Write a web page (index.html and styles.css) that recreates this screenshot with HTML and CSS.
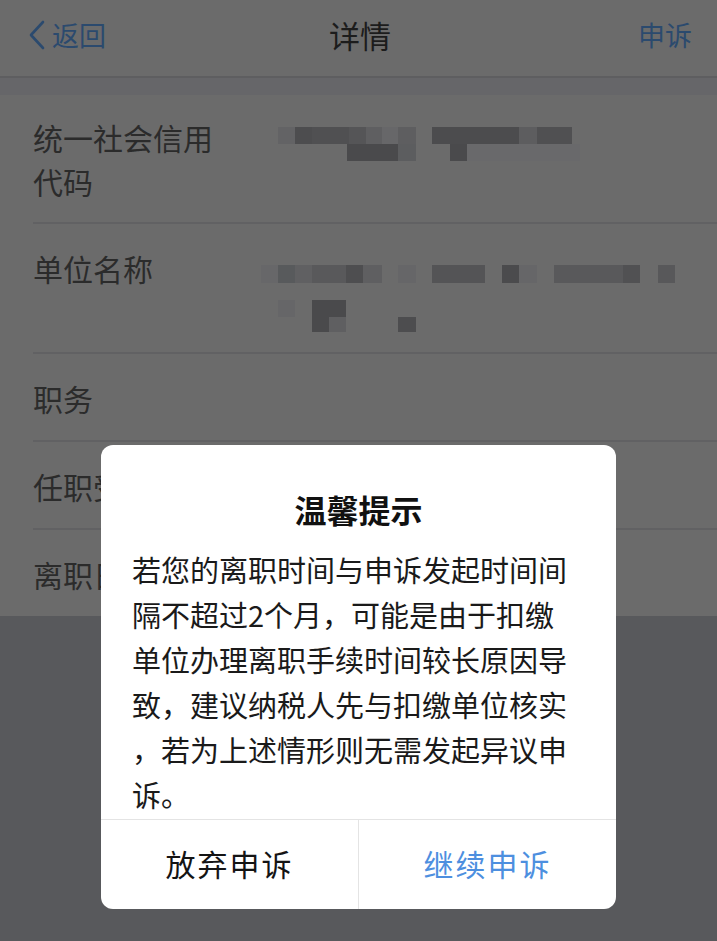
FILE: index.html
```html
<!DOCTYPE html>
<html lang="zh-CN">
<head>
    <meta charset="UTF-8">
    <meta name="viewport" content="width=device-width, initial-scale=1.0">
    <title>详情</title>
    <link rel="stylesheet" href="styles.css">
</head>
<body>
    <div class="page">
        <div class="navbar">
            <a class="nav-back" href="#">
                <svg class="chevron" width="18" height="30" viewBox="0 0 18 30">
                    <polyline points="15,2 3,15 15,28" fill="none" stroke="currentColor" stroke-width="2.6" stroke-linecap="round" stroke-linejoin="round"/>
                </svg>
                返回
            </a>
            <div class="nav-title">详情</div>
            <a class="nav-action" href="#">申诉</a>
        </div>
        <div class="section-gap"></div>

        <div class="info-list">
            <div class="info-row">
                <div class="info-label">统一社会信用代码</div>
                <div class="info-value">
                    <!-- blurred value -->
                    <svg class="mosaic mosaic-code" width="330" height="34">
                        <rect x="17" y="0" width="17" height="17" fill="#636365"/>
                        <rect x="34" y="0" width="17" height="17" fill="#4d4d4f"/>
                        <rect x="51" y="0" width="37" height="17" fill="#505052"/>
                        <rect x="88" y="0" width="17" height="17" fill="#555557"/>
                        <rect x="105" y="0" width="16" height="17" fill="#5f5f61"/>
                        <rect x="121" y="0" width="16" height="17" fill="#676769"/>
                        <rect x="137" y="0" width="18" height="17" fill="#5e5e60"/>
                        <rect x="171" y="0" width="87" height="17" fill="#4c4c4e"/>
                        <rect x="258" y="0" width="18" height="17" fill="#5d5d5f"/>
                        <rect x="276" y="0" width="35" height="17" fill="#505052"/>
                        <rect x="86" y="17" width="51" height="17" fill="#4a4a4c"/>
                        <rect x="137" y="17" width="18" height="17" fill="#5c5d5f"/>
                        <rect x="189" y="17" width="17" height="17" fill="#4a4a4c"/>
                        <rect x="206" y="17" width="113" height="17" fill="#69696b"/>
                    </svg>
                </div>
            </div>
            <div class="info-row">
                <div class="info-label">单位名称</div>
                <div class="info-value">
                    <svg class="mosaic mosaic-name" width="420" height="67">
                        <rect x="0" y="0" width="17" height="18" fill="#676769"/>
                        <rect x="17" y="0" width="17" height="18" fill="#585a5c"/>
                        <rect x="34" y="0" width="17" height="18" fill="#606062"/>
                        <rect x="51" y="0" width="34" height="18" fill="#59595b"/>
                        <rect x="85" y="0" width="17" height="18" fill="#4e4e50"/>
                        <rect x="102" y="0" width="19" height="18" fill="#5f5f61"/>
                        <rect x="137" y="0" width="18" height="18" fill="#666668"/>
                        <rect x="171" y="0" width="53" height="18" fill="#545456"/>
                        <rect x="241" y="0" width="17" height="18" fill="#4b4b4d"/>
                        <rect x="258" y="0" width="18" height="18" fill="#666668"/>
                        <rect x="293" y="0" width="69" height="18" fill="#59595b"/>
                        <rect x="362" y="0" width="17" height="18" fill="#515153"/>
                        <rect x="397" y="0" width="17" height="18" fill="#58585a"/>
                        <rect x="17" y="35" width="17" height="17" fill="#666668"/>
                        <rect x="51" y="35" width="34" height="17" fill="#4a4a4c"/>
                        <rect x="51" y="52" width="17" height="15" fill="#4a4a4c"/>
                        <rect x="68" y="52" width="17" height="15" fill="#5f5f61"/>
                        <rect x="137" y="52" width="18" height="15" fill="#4d4d4f"/>
                    </svg>
                </div>
            </div>
            <div class="info-row">
                <div class="info-label">职务</div>
                <div class="info-value"></div>
            </div>
            <div class="info-row">
                <div class="info-label">任职受雇日期</div>
                <div class="info-value"></div>
            </div>
            <div class="info-row">
                <div class="info-label">离职日期</div>
                <div class="info-value"></div>
            </div>
        </div>
    </div>

    <div class="dialog">
        <div class="dialog-title">温馨提示</div>
        <p class="dialog-text">若您的离职时间与申诉发起时间间隔不超过2个月，可能是由于扣缴单位办理离职手续时间较长原因导致，建议纳税人先与扣缴单位核实，若为上述情形则无需发起异议申诉。</p>
        <div class="dialog-buttons">
            <button class="btn-cancel">放弃申诉</button>
            <button class="btn-confirm">继续申诉</button>
        </div>
    </div>
</body>
</html>
```

FILE: styles.css
```css
body {
    margin: 0;
    font-family: "Noto Sans CJK SC", "Noto Sans", sans-serif;
    background-color: #58595c; /* dimmed page background */
    min-height: 941px;
    position: relative;
}

.page {
    background-color: #6b6b6b;
}

.navbar {
    height: 68px;
    display: grid;
    grid-template-columns: 1fr auto 1fr;
    align-items: center;
    padding: 0 25px 8px 28px;
    border-bottom: 2px solid #5e5e60;
}

.nav-back,
.nav-action {
    color: #2b4a6e;
    text-decoration: none;
    font-size: 27px;
    line-height: 1;
}

.nav-back {
    display: flex;
    align-items: center;
    gap: 6px;
}

.chevron {
    margin-top: 2px;
}

.nav-title {
    font-size: 31px;
    color: #1c1c1c;
}

.nav-action {
    justify-self: end;
}

.section-gap {
    height: 17px;
    background-color: #666669;
}

.info-row {
    display: flex;
    margin-left: 33px;
    padding: 22px 0 20px;
    border-bottom: 2px solid #616163;
}

.info-row:first-child {
    padding: 20px 0 19px;
}

.info-row:last-child {
    border-bottom: none;
}

.info-label {
    width: 190px;
    font-size: 30px;
    line-height: 44px;
    color: #2b2b2b;
}

.info-value {
    flex: 1;
    padding-left: 38px;
    min-height: 44px;
}

.mosaic {
    display: block;
}

.mosaic-code {
    margin-top: 12px;
}

.mosaic-name {
    margin-top: 19px;
}

/* alert box on top of the dimmed page */
.dialog {
    position: absolute;
    top: 445px;
    left: 101px;
    width: 515px;
    background-color: #fff;
    border-radius: 12px;
    overflow: hidden;
}

.dialog-title {
    padding-top: 42px;
    font-size: 32px;
    line-height: 44px;
    font-weight: bold;
    text-align: center;
    color: #111;
}

.dialog-text {
    margin: 16px 0 2px;
    padding: 0 44px 0 31px;
    font-size: 29px;
    line-height: 45px;
    color: #1a1a1a;
    line-break: anywhere;
}

.dialog-buttons {
    display: flex;
    border-top: 1px solid #e4e4e4;
}

.dialog-buttons button {
    flex: 1;
    height: 89px;
    padding-bottom: 4px;
    border: none;
    background: none;
    font-family: inherit;
    font-size: 30px;
    letter-spacing: 2px;
    cursor: pointer;
}

.btn-cancel {
    color: #141414;
    border-right: 1px solid #e4e4e4 !important;
}

.btn-confirm {
    color: #4d8fdf;
}
```
